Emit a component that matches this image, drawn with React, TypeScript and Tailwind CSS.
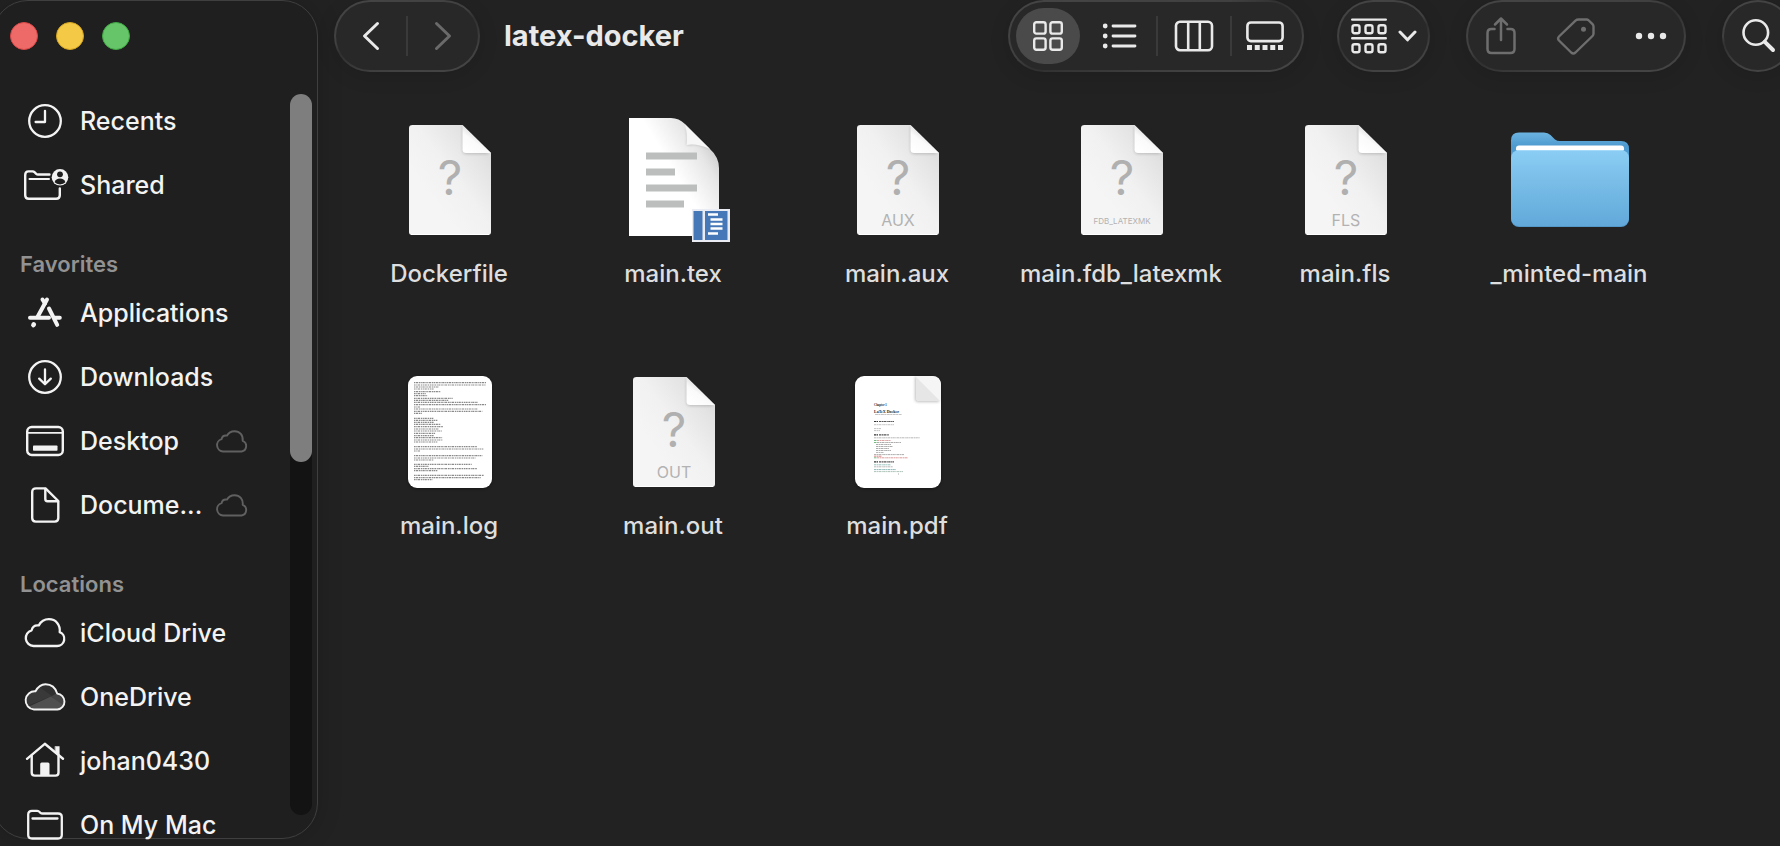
import React from "react";

const stroke = {
  fill: "none",
  stroke: "currentColor",
  strokeLinecap: "round" as const,
  strokeLinejoin: "round" as const,
};

function ClockIcon() {
  return (
    <svg width="40" height="40" viewBox="0 0 40 40" {...stroke} strokeWidth="2.3">
      <circle cx="20" cy="20" r="15.8" />
      <path d="M20 9.8V21H10.6" />
    </svg>
  );
}

function SharedIcon() {
  return (
    <svg className="shrink-0" width="48" height="40" viewBox="0 0 48 40" {...stroke} strokeWidth="2.4">
      <path d="M28.500 9.500H17Q16 9.500 15.200 8.800L13.500 7.200Q12.800 6.400 11.500 6.400H7.500Q4.200 6.400 4.200 10V30.200Q4.200 33.800 7.800 33.800H35.200Q38.800 33.800 38.800 30.200V23.500" />
      <path d="M8.500 13.900H28" strokeWidth="2" />
      <circle cx="39" cy="12.300" r="8.300" fill="currentColor" stroke="none" />
      <circle cx="39" cy="9.300" r="2.900" fill="#1f1f1f" stroke="none" />
      <path d="M33.600 17.300Q34.800 13.600 39 13.600T44.400 17.300Q42.400 19.400 39 19.400T33.600 17.300Z" fill="#1f1f1f" stroke="none" />
    </svg>
  );
}

function AppsIcon() {
  return (
    <svg width="40" height="40" viewBox="0 0 40 40" {...stroke} strokeWidth="4">
      <path d="M22 6.500L12.500 24" />
      <path d="M17.500 6.500L20 10.500" />
      <path d="M24 15.500L32.200 31.800" />
      <path d="M5 24.800H24M30 24.800H34.800" />
      <path d="M8.800 31.400L8.400 32" strokeWidth="4.600" />
    </svg>
  );
}

function DownloadIcon() {
  return (
    <svg width="40" height="40" viewBox="0 0 40 40" {...stroke} strokeWidth="2.3">
      <circle cx="20" cy="20" r="15.800" />
      <path d="M20 12.500V27M14.200 21.600L20 27.300L25.800 21.600" />
    </svg>
  );
}

function DesktopIcon() {
  return (
    <svg width="40" height="40" viewBox="0 0 40 40" {...stroke} strokeWidth="2.400">
      <rect x="2.200" y="6" width="35.600" height="28" rx="4.500" />
      <path d="M3 11.800H37" strokeWidth="1.800" strokeLinecap="butt" />
      <rect x="8" y="24.500" width="24.500" height="5.300" rx="0.800" fill="currentColor" stroke="none" />
    </svg>
  );
}

function DocumentIcon() {
  return (
    <svg width="40" height="40" viewBox="0 0 40 40" {...stroke} strokeWidth="2.400">
      <path d="M11 3.400H20.500L33.300 16V33Q33.300 36.600 29.700 36.600H10.800Q7.200 36.600 7.200 33V7Q7.200 3.400 11 3.400Z" />
      <path d="M20.300 4V14Q20.300 16.200 22.500 16.200H33" />
    </svg>
  );
}

function CloudIcon() {
  return (
    <svg width="42" height="36" viewBox="0 0 42 36" {...stroke} strokeWidth="2.300">
      <path d="M9.500 31A8 8 0 0 1 7.600 15.300Q9 9.600 14.800 10.400C17.500 5.200 21.500 4.200 24.900 4.200C31.900 4.200 36.500 9.900 35.700 17.100A7.200 7.200 0 0 1 33 31Z" />
    </svg>
  );
}

function SmallCloudIcon() {
  return (
    <svg className="shrink-0 text-[#606060]" width="34" height="26" viewBox="0 0 34 26" {...stroke} strokeWidth="1.900">
      <path d="M8 23.500A6.300 6.300 0 0 1 6.500 11.200Q7.500 6.900 12 7.600C14 3.800 17 3.200 19.500 3.200C24.800 3.200 28.300 7.300 27.700 12.800A5.600 5.600 0 0 1 26.500 23.500Z" />
    </svg>
  );
}

function OneDriveIcon() {
  return (
    <svg width="44" height="36" viewBox="0 0 44 36">
      <defs>
        <clipPath id="onedrive-cloud">
          <path d="M11 30.500A9 9 0 0 1 12.500 12.300C15 7.500 18.500 5.200 22.500 5.200C28.500 5.200 32.500 8.600 34.200 14.600A8 8 0 0 1 34.500 30.500Z" />
        </clipPath>
      </defs>
      <g clipPath="url(#onedrive-cloud)">
        <rect width="44" height="36" fill="#303030" />
        <path d="M0 5H12L29 17L4 27H0Z" fill="#393939" />
        <path d="M5 28L28 17.500L44 27V36H5Z" fill="#505050" />
        <path d="M28 17.500L36 13L44 18V29Z" fill="#454545" />
      </g>
      <path d="M11 30.500A9 9 0 0 1 12.500 12.300C15 7.500 18.500 5.200 22.500 5.200C28.500 5.200 32.500 8.600 34.200 14.600A8 8 0 0 1 34.500 30.500Z" {...stroke} strokeWidth="1.900" />
    </svg>
  );
}

function HomeIcon() {
  return (
    <svg width="40" height="40" viewBox="0 0 40 40" {...stroke} strokeWidth="2.400">
      <path d="M2 17.800L19.800 2.800L38 17.800" />
      <path d="M6.700 15V31.500Q6.700 34.600 9.800 34.600H30.500Q33.500 34.600 33.500 31.500V15" />
      <path d="M30.300 5.500H34.300V14L30.300 10.600Z" fill="currentColor" strokeWidth="0.500" />
      <path d="M15.200 34.500V23Q15.200 21.500 16.700 21.500H23Q24.500 21.500 24.500 23V34.500Z" fill="currentColor" stroke="none" />
    </svg>
  );
}

function FolderIcon() {
  return (
    <svg width="40" height="40" viewBox="0 0 40 40" {...stroke} strokeWidth="2.300">
      <path d="M7 5.800H12Q13.200 5.800 14 6.500L15.500 7.800Q16.300 8.500 17.500 8.500H33Q36.800 8.500 36.800 12V30Q36.800 33.500 33 33.500H7Q3.200 33.500 3.200 30V9.500Q3.200 5.800 7 5.800Z" />
      <path d="M7.500 13.500H32.500" />
    </svg>
  );
}

type Place = { name: string; icon: React.ReactNode; cloud?: boolean };

const library: Place[] = [
  { name: "Recents", icon: <ClockIcon /> },
  { name: "Shared", icon: <SharedIcon /> },
];
const favorites: Place[] = [
  { name: "Applications", icon: <AppsIcon /> },
  { name: "Downloads", icon: <DownloadIcon /> },
  { name: "Desktop", icon: <DesktopIcon />, cloud: true },
  { name: "Docume...", icon: <DocumentIcon />, cloud: true },
];
const locations: Place[] = [
  { name: "iCloud Drive", icon: <CloudIcon /> },
  { name: "OneDrive", icon: <OneDriveIcon /> },
  { name: "johan0430", icon: <HomeIcon /> },
  { name: "On My Mac", icon: <FolderIcon /> },
];

function PlaceList({ title, places }: { title?: string; places: Place[] }) {
  return (
    <section>
      {title && (
        <h2 className="flex h-16 items-end pb-[3px] pl-[27px] text-[22px] leading-7 font-semibold text-[#929292]">
          {title}
        </h2>
      )}
      <ul>
        {places.map((p) => (
          <li key={p.name}>
            <a href="#" className="flex h-16 items-center pl-[29px] text-[25px] leading-8 font-medium text-[#f3f3f3]">
              <span className="flex w-[46px] shrink-0 items-center justify-center">{p.icon}</span>
              <span className="ml-3 flex-1 whitespace-nowrap">{p.name}</span>
              {p.cloud && (
                <span className="mr-[41px]">
                  <SmallCloudIcon />
                </span>
              )}
            </a>
          </li>
        ))}
      </ul>
    </section>
  );
}

function Sidebar() {
  return (
    <aside className="-ml-2 mb-[7px] flex w-[326px] shrink-0 flex-col rounded-[36px] border border-[#3f3f3f] bg-[#1f1f1f] shadow-[0_0_24px_rgba(0,0,0,0.18)]">
      <div className="flex gap-[18px] pt-[21px] pl-[17px]">
        <button aria-label="Close" className="size-7 rounded-full border border-[#d94747] bg-[#ee6a68]" />
        <button aria-label="Minimize" className="size-7 rounded-full border border-[#d5a521] bg-[#f4c945]" />
        <button aria-label="Zoom" className="size-7 rounded-full border border-[#3fa744] bg-[#65c568]" />
      </div>
      <div className="mt-[39px] flex min-h-0 flex-1">
        <nav className="min-w-0 flex-1">
          <PlaceList places={library} />
          <PlaceList title="Favorites" places={favorites} />
          <PlaceList title="Locations" places={locations} />
        </nav>
        <div className="mt-[5px] mr-[5px] mb-[23px] w-[22px] shrink-0 rounded-full bg-[#131313]">
          <div className="h-[51%] rounded-full bg-[#7e7e7e]" />
        </div>
      </div>
    </aside>
  );
}

function Pill({ className, children }: { className: string; children: React.ReactNode }) {
  return (
    <div
      className={
        "flex h-[72px] shrink-0 items-center rounded-full border-2 border-transparent shadow-[0_4px_20px_rgba(0,0,0,0.12)] [background:linear-gradient(#282828,#282828)_padding-box,linear-gradient(165deg,#454545_0%,#404040_40%,#303030_50%,#404040_75%,#464646_100%)_border-box] " +
        className
      }
    >
      {children}
    </div>
  );
}

function Separator() {
  return <div className="h-10 w-[2px] shrink-0 bg-[#3a3a3a]" />;
}

function ToolButton({ label, className, children }: { label: string; className: string; children: React.ReactNode }) {
  return (
    <button aria-label={label} className={"flex h-14 items-center justify-center " + className}>
      {children}
    </button>
  );
}

function Toolbar() {
  return (
    <header className="-mr-[14px] flex items-center pl-4 text-[#e9e9e9]">
      <Pill className="w-[146px]">
        <ToolButton label="Back" className="flex-1">
          <svg width="20" height="32" viewBox="0 0 20 32" {...stroke} strokeWidth="3">
            <path d="M16.500 3.500L3.500 16L16.500 28.500" />
          </svg>
        </ToolButton>
        <Separator />
        <ToolButton label="Forward" className="flex-1 text-[#6a6a6a]">
          <svg width="20" height="32" viewBox="0 0 20 32" {...stroke} strokeWidth="3">
            <path d="M3.500 3.500L16.500 16L3.500 28.500" />
          </svg>
        </ToolButton>
      </Pill>
      <h1 className="ml-6 text-[29px] leading-9 font-bold whitespace-nowrap">latex-docker</h1>

      <Pill className="ml-auto w-[296px] pl-[6px]">
        <ToolButton label="Icon view" className="w-16 rounded-full bg-[#4a4a4a]">
          <svg width="32" height="32" viewBox="0 0 32 32" {...stroke} strokeWidth="2.400">
            <rect x="2.200" y="2.200" width="11.400" height="11.400" rx="2.200" />
            <rect x="18.400" y="2.200" width="11.400" height="11.400" rx="2.200" />
            <rect x="2.200" y="18.400" width="11.400" height="11.400" rx="2.200" />
            <rect x="18.400" y="18.400" width="11.400" height="11.400" rx="2.200" />
          </svg>
        </ToolButton>
        <ToolButton label="List view" className="ml-1 w-[72px]">
          <svg width="36" height="28" viewBox="0 0 36 28" {...stroke} strokeWidth="2.800">
            <path d="M11 4H33M11 14H33M11 24H33" />
            <g fill="currentColor" stroke="none">
              <circle cx="3.200" cy="4" r="2.400" />
              <circle cx="3.200" cy="14" r="2.400" />
              <circle cx="3.200" cy="24" r="2.400" />
            </g>
          </svg>
        </ToolButton>
        <Separator />
        <ToolButton label="Column view" className="w-[72px]">
          <svg width="40" height="32" viewBox="0 0 40 32" {...stroke} strokeWidth="2.600">
            <rect x="2" y="1.800" width="36" height="28.400" rx="4" />
            <path d="M14.200 2V30M25.800 2V30" strokeLinecap="butt" />
          </svg>
        </ToolButton>
        <Separator />
        <ToolButton label="Gallery view" className="w-[66px]">
          <svg width="40" height="32" viewBox="0 0 40 32" {...stroke} strokeWidth="2.600">
            <rect x="2.400" y="2.500" width="35.200" height="18.600" rx="3.500" />
            <path d="M2 27.500H38" strokeWidth="5" strokeLinecap="butt" strokeDasharray="5 2.750" />
          </svg>
        </ToolButton>
      </Pill>

      <Pill className="ml-[33px] w-[93px] justify-center">
        <button aria-label="Group items" className="flex items-center gap-[11px]">
          <svg width="36" height="36" viewBox="0 0 36 36" {...stroke} strokeWidth="2.400">
            <path d="M1.200 1.600H34.800M1.200 20.300H34.800" />
            <rect x="1.500" y="7.300" width="7" height="8" rx="2" />
            <rect x="14.500" y="7.300" width="7" height="8" rx="2" />
            <rect x="27.500" y="7.300" width="7" height="8" rx="2" />
            <rect x="1.500" y="26.300" width="7" height="8" rx="2" />
            <rect x="14.500" y="26.300" width="7" height="8" rx="2" />
            <rect x="27.500" y="26.300" width="7" height="8" rx="2" />
          </svg>
          <svg width="19" height="14" viewBox="0 0 19 14" {...stroke} strokeWidth="3">
            <path d="M2 3L9.500 10.800L17 3" />
          </svg>
        </button>
      </Pill>

      <Pill className="ml-9 w-[220px] justify-center">
        <ToolButton label="Share" className="w-[75px] shrink-0 text-[#6e6e6e]">
          <svg width="32" height="40" viewBox="0 0 32 40" {...stroke} strokeWidth="2.500">
            <path d="M9.500 13H6.500Q2.500 13 2.500 17V33Q2.500 37 6.500 37H25.500Q29.500 37 29.500 33V17Q29.500 13 25.500 13H22.500" />
            <path d="M16 24V2.800M10 8.500L16 2.500L22 8.500" />
          </svg>
        </ToolButton>
        <ToolButton label="Tags" className="w-[75px] shrink-0 text-[#6e6e6e]">
          <svg width="40" height="40" viewBox="0 0 40 40" {...stroke} strokeWidth="2.400">
            <path d="M22.500 3.500H30.500Q31.800 3.500 32.800 4.500L36.500 8.200Q37.500 9.200 37.500 10.500V17.500Q37.500 19 36.500 20L19.500 36.500Q17.300 38.300 15.200 36.500L3 24.500Q1.200 22.500 3 20.500L19.500 4.600Q20.800 3.500 22.500 3.500Z" />
            <circle cx="27.500" cy="13.300" r="2.500" fill="currentColor" stroke="none" />
          </svg>
        </ToolButton>
        <ToolButton label="More" className="w-[75px] shrink-0">
          <svg width="32" height="8" viewBox="0 0 32 8" fill="currentColor">
            <circle cx="4" cy="4" r="3.200" />
            <circle cx="16" cy="4" r="3.200" />
            <circle cx="28" cy="4" r="3.200" />
          </svg>
        </ToolButton>
      </Pill>

      <Pill className="ml-9 w-[72px] pl-[17px]">
        <ToolButton label="Search" className="">
          <svg width="36" height="36" viewBox="0 0 36 36" {...stroke} strokeWidth="2.600">
            <circle cx="14.800" cy="14.500" r="12.300" />
            <path d="M23.800 23.800L32 32" strokeWidth="4" />
          </svg>
        </ToolButton>
      </Pill>
    </header>
  );
}

function Defs() {
  return (
    <svg width="0" height="0" className="absolute" aria-hidden="true">
      <defs>
        <linearGradient id="page" x1="1" y1="0" x2="0.300" y2="0.700">
          <stop offset="0" stopColor="#d2d2d2" />
          <stop offset="0.300" stopColor="#e3e3e3" />
          <stop offset="0.650" stopColor="#f1f1f1" />
          <stop offset="1" stopColor="#f5f5f5" />
        </linearGradient>
        <linearGradient id="fold" x1="0.200" y1="1" x2="0.650" y2="0.400">
          <stop offset="0" stopColor="#ffffff" />
          <stop offset="0.600" stopColor="#fafafa" />
          <stop offset="1" stopColor="#dedede" />
        </linearGradient>
        <linearGradient id="tex-page" x1="1" y1="0.050" x2="0.500" y2="0.450">
          <stop offset="0" stopColor="#b4b4b4" />
          <stop offset="0.500" stopColor="#e6e6e6" />
          <stop offset="1" stopColor="#ffffff" />
        </linearGradient>
        <linearGradient id="folder-back" x1="0" y1="0" x2="0" y2="1">
          <stop offset="0" stopColor="#6cb3e0" />
          <stop offset="0.300" stopColor="#4f9bd0" />
        </linearGradient>
        <linearGradient id="folder-front" x1="0" y1="0" x2="0" y2="1">
          <stop offset="0" stopColor="#8bcdf4" />
          <stop offset="0.500" stopColor="#76bbe6" />
          <stop offset="1" stopColor="#62a9da" />
        </linearGradient>
        <filter id="soft" x="-50%" y="-50%" width="200%" height="200%">
          <feGaussianBlur stdDeviation="1.500" />
        </filter>
      </defs>
    </svg>
  );
}

function UnknownFile({ ext }: { ext?: string }) {
  const long = ext !== undefined && ext.length > 4;
  return (
    <svg width="128" height="128" viewBox="0 0 128 128">
      <path d="M27.500 9H77.500L106 37V116Q106 119 103 119H27Q24 119 24 116V12Q24 9 27.500 9Z" fill="url(#page)" />
      <path d="M77.500 10V34Q77.500 38 81.500 38H104L78 10Z" fill="#000" opacity="0.180" filter="url(#soft)" />
      <path d="M77.500 9L106 37H81Q77.500 37 77.500 33.500Z" fill="url(#fold)" />
      <path d="M26 118.500H104" stroke="#ffffff" strokeWidth="1" />
      <text x="65" y="79" textAnchor="middle" fontSize="48" fontWeight="400" fill="#b0b0b0">
        ?
      </text>
      {ext && (
        <text x="65" y={long ? 108 : 110} textAnchor="middle" fontSize={long ? 8 : 16} fontWeight="400" fill="#b2b2b2">
          {ext}
        </text>
      )}
    </svg>
  );
}

function TexFile() {
  return (
    <svg width="128" height="128" viewBox="0 0 128 128">
      <path d="M20 2H62Q70 2 76 8L100 32Q110 41 110 52V120H20Z" fill="url(#tex-page)" />
      <path d="M77 12Q80 22 77.500 29Q92 26 102 34Z" fill="#000" opacity="0.250" filter="url(#soft)" />
      <path d="M76 8.500Q79 20 77.500 29Q88 27 101 33Z" fill="#f6f6f6" />
      <g fill="#bcbebd">
        <rect x="37" y="36.500" width="51" height="7" />
        <rect x="37" y="52.500" width="29" height="7" />
        <rect x="37" y="68.500" width="51" height="7" />
        <rect x="37" y="84.500" width="38" height="7" />
      </g>
      <rect x="83" y="93" width="38" height="33" fill="#e9edf3" />
      <rect x="84.500" y="95" width="9" height="29" fill="#4678b8" />
      <rect x="96" y="95" width="22.500" height="29" fill="#4678b8" />
      <path d="M99 98.500H109M101.500 103.500H113.500M101.500 108H113.500M101.500 112.500H113.500M99 117.500H109" stroke="#fff" strokeWidth="2.400" />
    </svg>
  );
}

function FolderArt() {
  return (
    <svg width="128" height="128" viewBox="0 0 128 128">
      <path d="M14 16.500H39Q43 16.500 45.500 19L50 23.500Q52 25 55 25H116Q124 25 124 33V60H6V24.500Q6 16.500 14 16.500Z" fill="url(#folder-back)" />
      <rect x="11" y="29.500" width="108" height="12" rx="3" fill="#ffffff" />
      <rect x="6" y="34" width="118" height="77" rx="8" fill="#5398c9" />
      <rect x="6" y="34" width="118" height="76" rx="8" fill="url(#folder-front)" />
      <path d="M12 34.500H118" stroke="#a5daf8" strokeWidth="1" />
    </svg>
  );
}

const logLines: [number, number][] = [
  [68, 216], [75, 216], [81, 75], [87, 60], [95, 80], [101, 35], [107, 40], [115, 116], [121, 103],
  [127, 192], [134, 216], [141, 20], [147, 190], [154, 205], [160, 25], [175, 58], [181, 70], [187, 60],
  [193, 80], [200, 88], [207, 75], [213, 84], [220, 65], [227, 60], [233, 85], [240, 85], [246, 70],
  [260, 190], [267, 208], [273, 20], [287, 205], [294, 185], [300, 58], [313, 173], [319, 45],
  [326, 190], [332, 70], [346, 210], [353, 200], [359, 55],
];

function LogFile() {
  return (
    <svg width="128" height="128" viewBox="0 0 128 128">
      <rect x="23" y="9" width="84" height="112" rx="9" fill="#000" opacity="0.350" filter="url(#soft)" />
      <rect x="23" y="8" width="84" height="112" rx="9" fill="#ffffff" />
      {logLines.map(([y, w], i) => (
        <path
          key={y}
          d={`M29 ${y / 3 - 8}h${w / 3}`}
          stroke="#8a8a8a"
          strokeWidth="1.200"
          strokeDasharray={i % 2 ? "1.600 0.700 1.100 0.500 2.100 0.800" : "1.200 0.600 2.300 0.700 1.300 0.500"}
        />
      ))}
    </svg>
  );
}

const pdfLines: [number, number, number, string][] = [
  [41, 52.500, 4, "#333"], [46, 52.500, 15, "#555"], [41, 55.700, 20, "#aaa"],
  [41, 59.600, 7, "#aaa"], [41, 61.600, 6, "#aaa"],
  [41, 65.800, 4, "#333"], [46, 65.800, 10, "#555"], [41, 68.800, 46, "#999"],
  [41, 71.500, 3, "#3a9a4a"], [44, 71.500, 14, "#cc7a7a"], [41, 73.500, 3, "#3a9a4a"], [44, 73.500, 24, "#888"],
  [43, 75.500, 15, "#888"], [43, 77.500, 17, "#888"], [43, 79.500, 13, "#888"], [43, 81.500, 15, "#888"],
  [43, 83.500, 8, "#999"], [41, 85.600, 30, "#888"], [41, 87.200, 8, "#cc5555"],
  [41, 88.800, 3, "#3a9a4a"], [44, 88.800, 31, "#cf6f6f"],
  [41, 92.800, 4, "#333"], [46, 92.800, 15, "#555"], [41, 95.800, 17, "#6aa6a0"], [41, 97.800, 19, "#999"],
  [41, 100.600, 22, "#5a9a9a"], [41, 102.600, 29, "#88a898"],
];

function PdfFile() {
  return (
    <svg width="128" height="128" viewBox="0 0 128 128">
      <rect x="22" y="9" width="86" height="112" rx="9" fill="#000" opacity="0.350" filter="url(#soft)" />
      <rect x="22" y="8" width="86" height="112" rx="9" fill="#ffffff" />
      <path d="M82 9V31Q82 34 85 34H106V17Q106 9 99 9Z" fill="#000" opacity="0.250" filter="url(#soft)" />
      <path d="M83 8H99Q108 8 108 17V33H86Q83 33 83 30Z" fill="#f5f5f5" />
      <path d="M83 9L107 33H86Q83 33 83 30Z" fill="#e6e6e6" />
      <g className="[font-family:'Liberation_Serif',serif]" fontWeight="700" fill="#222">
        <text x="41" y="38" fontSize="3">Chapter 1</text>
        <text x="41" y="45" fontSize="4">LaTeX Docker</text>
      </g>
      <path d="M42 46.500h27" stroke="#aaa" strokeWidth="0.700" strokeDasharray="3 0.400 2 0.500" />
      {pdfLines.map(([x, y, w, color]) => (
        <path
          key={`${x}-${y}`}
          d={`M${x} ${y + 1}h${w}`}
          stroke={color}
          strokeWidth={color === "#333" || color === "#555" ? 1.2 : 0.7}
          strokeDasharray="2.400 0.500 1.300 0.400"
        />
      ))}
      <path d="M65 106h1" stroke="#aaa" strokeWidth="1" />
    </svg>
  );
}

const files: { name: string; art: React.ReactNode }[] = [
  { name: "Dockerfile", art: <UnknownFile /> },
  { name: "main.tex", art: <TexFile /> },
  { name: "main.aux", art: <UnknownFile ext="AUX" /> },
  { name: "main.fdb_latexmk", art: <UnknownFile ext="FDB_LATEXMK" /> },
  { name: "main.fls", art: <UnknownFile ext="FLS" /> },
  { name: "_minted-main", art: <FolderArt /> },
  { name: "main.log", art: <LogFile /> },
  { name: "main.out", art: <UnknownFile ext="OUT" /> },
  { name: "main.pdf", art: <PdfFile /> },
];

export default function App() {
  return (
    <div className="flex h-screen overflow-hidden bg-[#222222] [font-family:Inter,'Liberation_Sans',sans-serif]">
      <Defs />
      <Sidebar />
      <main className="min-w-0 flex-1">
        <Toolbar />
        <ul className="mt-11 grid grid-cols-[repeat(auto-fill,224px)] gap-y-[76px] pl-[19px]">
          {files.map((f) => (
            <li key={f.name}>
              <button className="flex w-full flex-col items-center">
                {f.art}
                <span className="mt-3 h-9 text-[24px] leading-9 font-medium whitespace-nowrap text-[#dedede]">{f.name}</span>
              </button>
            </li>
          ))}
        </ul>
      </main>
    </div>
  );
}
